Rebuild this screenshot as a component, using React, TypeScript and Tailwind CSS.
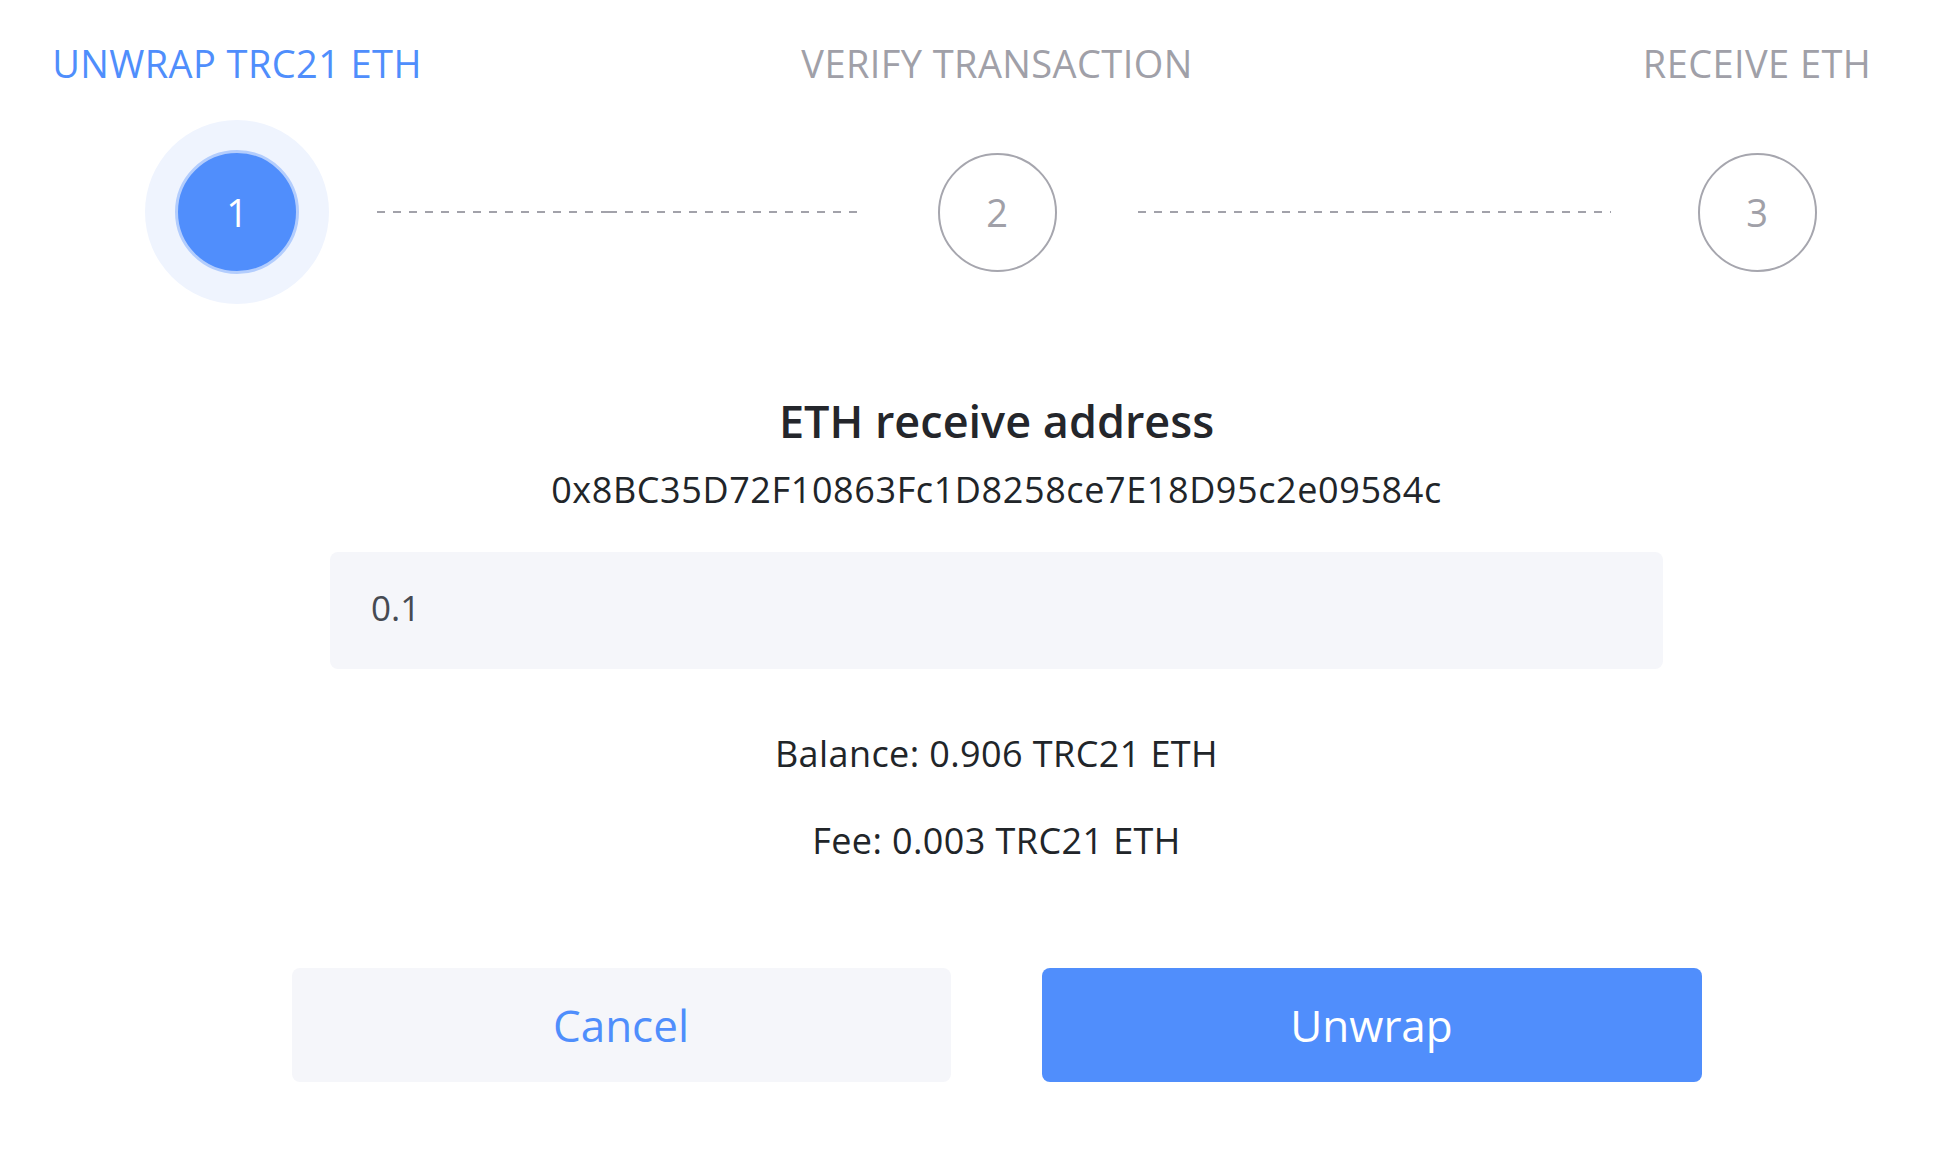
import React from "react";

const steps = [
  { label: "UNWRAP TRC21 ETH", n: 1 },
  { label: "VERIFY TRANSACTION", n: 2 },
  { label: "RECEIVE ETH", n: 3 },
];

function StepCircle({ n, active }: { n: number; active: boolean }) {
  if (active) {
    return (
      <div className="w-[184px] h-[184px] rounded-full bg-[#eff4fe] flex items-center justify-center">
        <div className="w-[124px] h-[124px] rounded-full bg-[#508efc] border-[3px] border-[#b3cdfd] flex items-center justify-center text-white text-[38px]">
          {n}
        </div>
      </div>
    );
  }
  return (
    <div className="w-[184px] h-[184px] flex items-center justify-center">
      <div className="w-[119px] h-[119px] rounded-full border-2 border-[#a6a6ae] flex items-center justify-center text-[#a0a0a8] text-[38px]">
        {n}
      </div>
    </div>
  );
}

// two dashed halves; where they meet the dashes run together
function DashedLine({ short }: { short?: boolean }) {
  return (
    <div className="flex-1 h-[184px] flex items-center justify-center">
      <div className={"flex " + (short ? "w-[473px] -translate-x-[3px]" : "w-[480px]")}>
        <div className="w-[232px] h-[2px] bg-[repeating-linear-gradient(to_right,#a2a2aa_0_8px,transparent_8px_16px)]" />
        <div className="flex-1 h-[2px] bg-[repeating-linear-gradient(to_right,#a2a2aa_0_8px,transparent_8px_16px)]" />
      </div>
    </div>
  );
}

export default function App() {
  return (
    <div className="w-[1940px] h-[1152px] bg-white font-['Open_Sans',sans-serif] text-[#212529]">
      {/* stepper */}
      <div className="flex items-end pl-[145px] pr-[91px] pt-[41px]">
        {steps.map((s, i) => (
          <React.Fragment key={s.n}>
            {i > 0 && <DashedLine short={i === 2} />}
            <div className="w-[184px] flex flex-col items-center">
              <div
                className={
                  "whitespace-nowrap text-[38px] tracking-[0.4px] leading-[44px] mb-[35px] " +
                  (i === 0 ? "text-[#4f8efc]" : "text-[#a0a0a8]")
                }
              >
                {s.label}
              </div>
              <StepCircle n={s.n} active={i === 0} />
            </div>
          </React.Fragment>
        ))}
      </div>

      <div className="flex flex-col items-center pl-[53px]">
        <h2 className="mt-[91px] text-[45px] leading-[52px] font-semibold text-[#24262b]">
          ETH receive address
        </h2>
        <div className="mt-[21px] text-[36px] tracking-[0.6px] leading-[44px]">
          0x8BC35D72F10863Fc1D8258ce7E18D95c2e09584c
        </div>

        <input
          className="mt-[40px] w-[1333px] h-[117px] rounded-[8px] bg-[#f5f6fa] px-[41px] pb-[6px] text-[35px] text-[#464a52] outline-none"
          defaultValue="0.1"
        />

        <div className="mt-[63px] text-[36px] tracking-[0.4px] leading-[44px]">Balance: 0.906 TRC21 ETH</div>
        <div className="mt-[43px] text-[36px] tracking-[0.4px] leading-[44px]">Fee: 0.003 TRC21 ETH</div>

        <div className="mt-[105px] flex gap-[91px]">
          <button className="w-[659px] h-[114px] rounded-[8px] bg-[#f5f6fa] text-[#4f8efc] text-[44px]">
            Cancel
          </button>
          <button className="w-[660px] h-[114px] rounded-[8px] bg-[#508efc] text-white text-[44px]">
            Unwrap
          </button>
        </div>
      </div>
    </div>
  );
}
